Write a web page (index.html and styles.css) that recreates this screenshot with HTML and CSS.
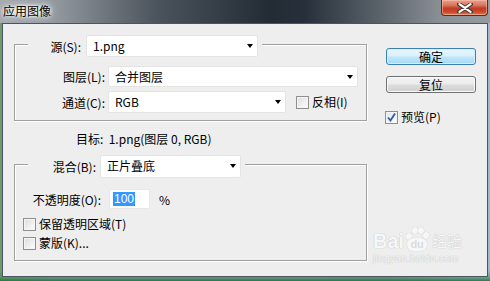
FILE: index.html
```html
<!DOCTYPE html>
<html lang="zh-CN">
<head>
<meta charset="utf-8">
<title>应用图像</title>
<link rel="stylesheet" href="styles.css">
</head>
<body>
<div class="win">
  <div class="titlebar">
    <span class="title">应用图像</span>
    <div class="close">
      <svg width="16" height="10" viewBox="0 0 16 10"><path d="M2 1 L14 9 M14 1 L2 9" stroke="#3a3a3a" stroke-width="4" stroke-linecap="round"/><path d="M2.5 1.2 L13.5 8.8 M13.5 1.2 L2.5 8.8" stroke="#ffffff" stroke-width="2.2" stroke-linecap="round"/></svg>
    </div>
  </div>
  <div class="client">
    <div class="main">
      <div class="group g1">
        <div class="legend l1">
          <span class="lbl">源(S):</span>
          <div class="select w-src"><span>1.png</span><i class="arrow"></i></div>
        </div>
        <div class="grid">
          <span class="lbl">图层(L):</span>
          <div class="select w-layer"><span>合并图层</span><i class="arrow"></i></div>
          <span class="lbl">通道(C):</span>
          <div class="row">
            <div class="select w-ch"><span>RGB</span><i class="arrow"></i></div>
            <label class="chk inv"><span class="box"></span>反相(I)</label>
          </div>
        </div>
      </div>
      <div class="target">目标:&nbsp; 1.png(图层 0, RGB)</div>
      <div class="group g2">
        <div class="legend l2">
          <span class="lbl">混合(B):</span>
          <div class="select w-blend"><span>正片叠底</span><i class="arrow"></i></div>
        </div>
        <div class="opacity">
          <span class="lbl olbl">不透明度(O):</span>
          <div class="input"><span class="sel">100</span></div>
          <span class="pct">%</span>
        </div>
        <label class="chk opt"><span class="box"></span>保留透明区域(T)</label>
        <label class="chk opt"><span class="box"></span>蒙版(K)...</label>
      </div>
    </div>
    <div class="side">
      <button class="btn default">确定</button>
      <button class="btn">复位</button>
      <label class="chk preview"><span class="box checked"><svg width="11" height="11" viewBox="0 0 11 11"><path d="M2 5.5 L4.5 8.5 L9 1.5" fill="none" stroke="#2a5ca8" stroke-width="1.8"/></svg></span>预览(P)</label>
    </div>
    <div class="watermark">
      <div class="wm-top"><span class="bai">Bai</span><span class="paw"><i class="t1"></i><i class="t2"></i><i class="t3"></i><i class="t4"></i><span class="pad">du</span></span><span class="jy">经验</span></div>
      <div class="wm-url">jingyan.baidu.com</div>
    </div>
  </div>
</div>
</body>
</html>
```

FILE: styles.css
```css
* { box-sizing: border-box; }
html, body { margin: 0; padding: 0; }
body {
  width: 490px;
  height: 281px;
  overflow: hidden;
  font-family: "Noto Sans CJK SC", "Liberation Sans", sans-serif;
  font-size: 12px;
  color: #000;
  background: linear-gradient(to right, #6f9a6c 0%, #8c979c 10%, #8c949a 80%, #9fb7d0 100%);
}
.win {
  width: 490px;
  height: 281px;
  display: flex;
  flex-direction: column;
  background: linear-gradient(to bottom, transparent 0, transparent 270px, rgba(60,140,80,0.6) 278px, rgba(40,110,70,0.9) 281px);
}
.titlebar {
  height: 23px;
  flex: none;
  display: flex;
  align-items: flex-start;
  justify-content: space-between;
  background: linear-gradient(to right, #a4aaaf 0%, #8f969c 12%, #4b535c 32%, #232b35 55%, #27303a 62%, #5c646c 78%, #8a9096 90%, #959ba0 100%);
}
.title {
  margin: 4px 0 0 3px;
  font-size: 12px;
  line-height: 14px;
  color: #000;
  text-shadow: 0 0 6px #e8ecef, 0 0 10px #e8ecef, 0 0 3px #ffffff;
  background: radial-gradient(ellipse at center, rgba(230,234,238,0.85) 30%, rgba(230,234,238,0) 75%);
  padding: 0 2px;
  margin-left: 1px;
}
.close {
  width: 47px;
  height: 16px;
  margin-right: 2px;
  border: 1px solid #5b2a22;
  border-top: none;
  border-radius: 0 0 4px 4px;
  background: linear-gradient(to bottom, #e9a290 0%, #d8765f 35%, #c23d22 55%, #c84a2c 80%, #e07a55 100%);
  box-shadow: inset 0 0 0 1px rgba(255,200,180,0.5);
  display: flex;
  align-items: center;
  justify-content: center;
}
.client {
  position: relative;
  flex: none;
  height: 254px;
  margin: 0 2px;
  border: 1px solid #4b5560;
  background: #eeeeee;
  display: flex;
  padding: 0 12px 0 11px;
}
.main {
  width: 354px;
  flex: none;
  padding-top: 20px;
}
.group {
  width: 353px;
  border: 1px solid #a0a0a0;
  box-shadow: 1px 1px 0 #ffffff, inset 1px 1px 0 #ffffff;
}
.legend {
  display: flex;
  align-items: center;
  width: max-content;
  margin-top: -10px;
  background: #eeeeee;
  padding: 0 4px;
  margin-left: 13px;
  height: 22px;
}
.l1 .lbl { width: 49px; text-align: right; margin-right: 5px; }
.l2 .lbl { width: 64px; text-align: right; margin-right: 4px; }
.select {
  position: relative;
  height: 22px;
  background: #ffffff;
  border: 1px solid #e4e4e4;
  border-radius: 2px;
  display: flex;
  align-items: center;
  padding-left: 6px;
  line-height: 20px;
}
.arrow {
  position: absolute;
  right: 4px;
  top: 50%;
  margin-top: -2px;
  width: 0; height: 0;
  border-left: 3.5px solid transparent;
  border-right: 3.5px solid transparent;
  border-top: 4px solid #000;
}
.w-src { width: 172px; }
.w-layer { width: 250px; height: 21px; }
.w-ch { width: 178px; height: 22px; }
.w-blend { width: 141px; height: 23px; }
.grid {
  display: grid;
  grid-template-columns: 90px auto;
  column-gap: 3px;
  row-gap: 4px;
  align-items: center;
  margin-top: 9px;
  padding-bottom: 7px;
}
.grid .lbl { text-align: right; }
.row { display: flex; align-items: center; }
.chk {
  display: flex;
  align-items: center;
  line-height: 16px;
}
.box {
  width: 13px;
  height: 13px;
  flex: none;
  border: 1px solid #8e8f8f;
  background: linear-gradient(135deg, #dcdcdc 0%, #f4f4f4 70%, #ffffff 100%);
  box-shadow: inset 0 0 0 1px #f4f4f4;
  margin-right: 3px;
  display: flex;
  align-items: center;
  justify-content: center;
}
.box.checked { background: linear-gradient(135deg, #e0e4ea, #ffffff); }
.inv { margin-left: 10px; }
.target {
  margin: 9px 0 0 62px;
  line-height: 18px;
  height: 18px;
}
.g2 { margin-top: 16px; }
.opacity {
  display: flex;
  align-items: center;
  margin-top: 12px;
}
.olbl { width: 86px; text-align: right; }
.input {
  width: 41px;
  height: 20px;
  margin-left: 8px;
  background: #fff;
  border: 1px solid #e8e8e8;
  border-radius: 2px;
  display: flex;
  align-items: center;
  padding-left: 3px;
}
.sel {
  background: #3399ff;
  color: #fff;
  line-height: 14px;
  padding: 0 1px;
  font-family: "Liberation Sans", sans-serif;
}
.pct { margin-left: 9px; }
.opt { margin-left: 8px; margin-top: 7px; }
.opt + .opt { margin-top: 3px; margin-bottom: 9px; }
.side {
  width: 90px;
  margin-left: 18px;
  padding-top: 24px;
  display: flex;
  flex-direction: column;
  align-items: flex-start;
}
.btn {
  width: 90px;
  height: 17px;
  font-family: "Noto Sans CJK SC", sans-serif;
  font-size: 12px;
  line-height: 13px;
  padding: 0;
  color: #000;
  border: 1px solid #707070;
  border-radius: 3px;
  background: linear-gradient(to bottom, #f4f4f4 0%, #ebebeb 48%, #dddddd 52%, #cfcfcf 100%);
  box-shadow: inset 0 0 0 1px #fbfbfb;
}
.btn.default {
  border-color: #3c7fb1;
  background: linear-gradient(to bottom, #eaf6fd 0%, #d9f0fc 48%, #bee6fd 52%, #a7d9f5 100%);
  box-shadow: inset 0 0 0 1px #d0f0ff;
}
.btn + .btn { margin-top: 11px; }
.preview { margin-top: 16px; margin-left: -1px; }
.watermark {
  position: absolute;
  left: 370px;
  top: 203px;
  color: #f7f7f7;
  text-shadow: 0 0 1px #c4c4c4, 0 0 1px #c4c4c4;
  font-family: "Liberation Sans", sans-serif;
}
.wm-top { display: flex; align-items: flex-end; height: 24px; }
.bai { font-size: 20px; font-weight: bold; line-height: 20px; }
.paw { position: relative; width: 24px; height: 24px; margin-left: 1px; }
.paw i { position: absolute; width: 6px; height: 7px; border-radius: 50%; background: #f7f7f7; box-shadow: 0 0 1px #bbb; }
.paw .t1 { left: 1px; top: 6px; }
.paw .t2 { left: 7px; top: 0; }
.paw .t3 { left: 13px; top: 0; }
.paw .t4 { left: 18px; top: 5px; }
.pad { position: absolute; left: 2px; top: 11px; width: 20px; height: 13px; border-radius: 6px; background: #f7f7f7; box-shadow: 0 0 1px #bbb; font-size: 11px; line-height: 13px; text-align: center; font-weight: bold; color: #dcdcdc; text-shadow: none; }
.jy { font-family: "Noto Sans CJK SC", sans-serif; font-size: 15px; line-height: 20px; margin-left: 3px; }
.wm-url { font-size: 10px; margin-top: 2px; letter-spacing: 0.3px; }
```
